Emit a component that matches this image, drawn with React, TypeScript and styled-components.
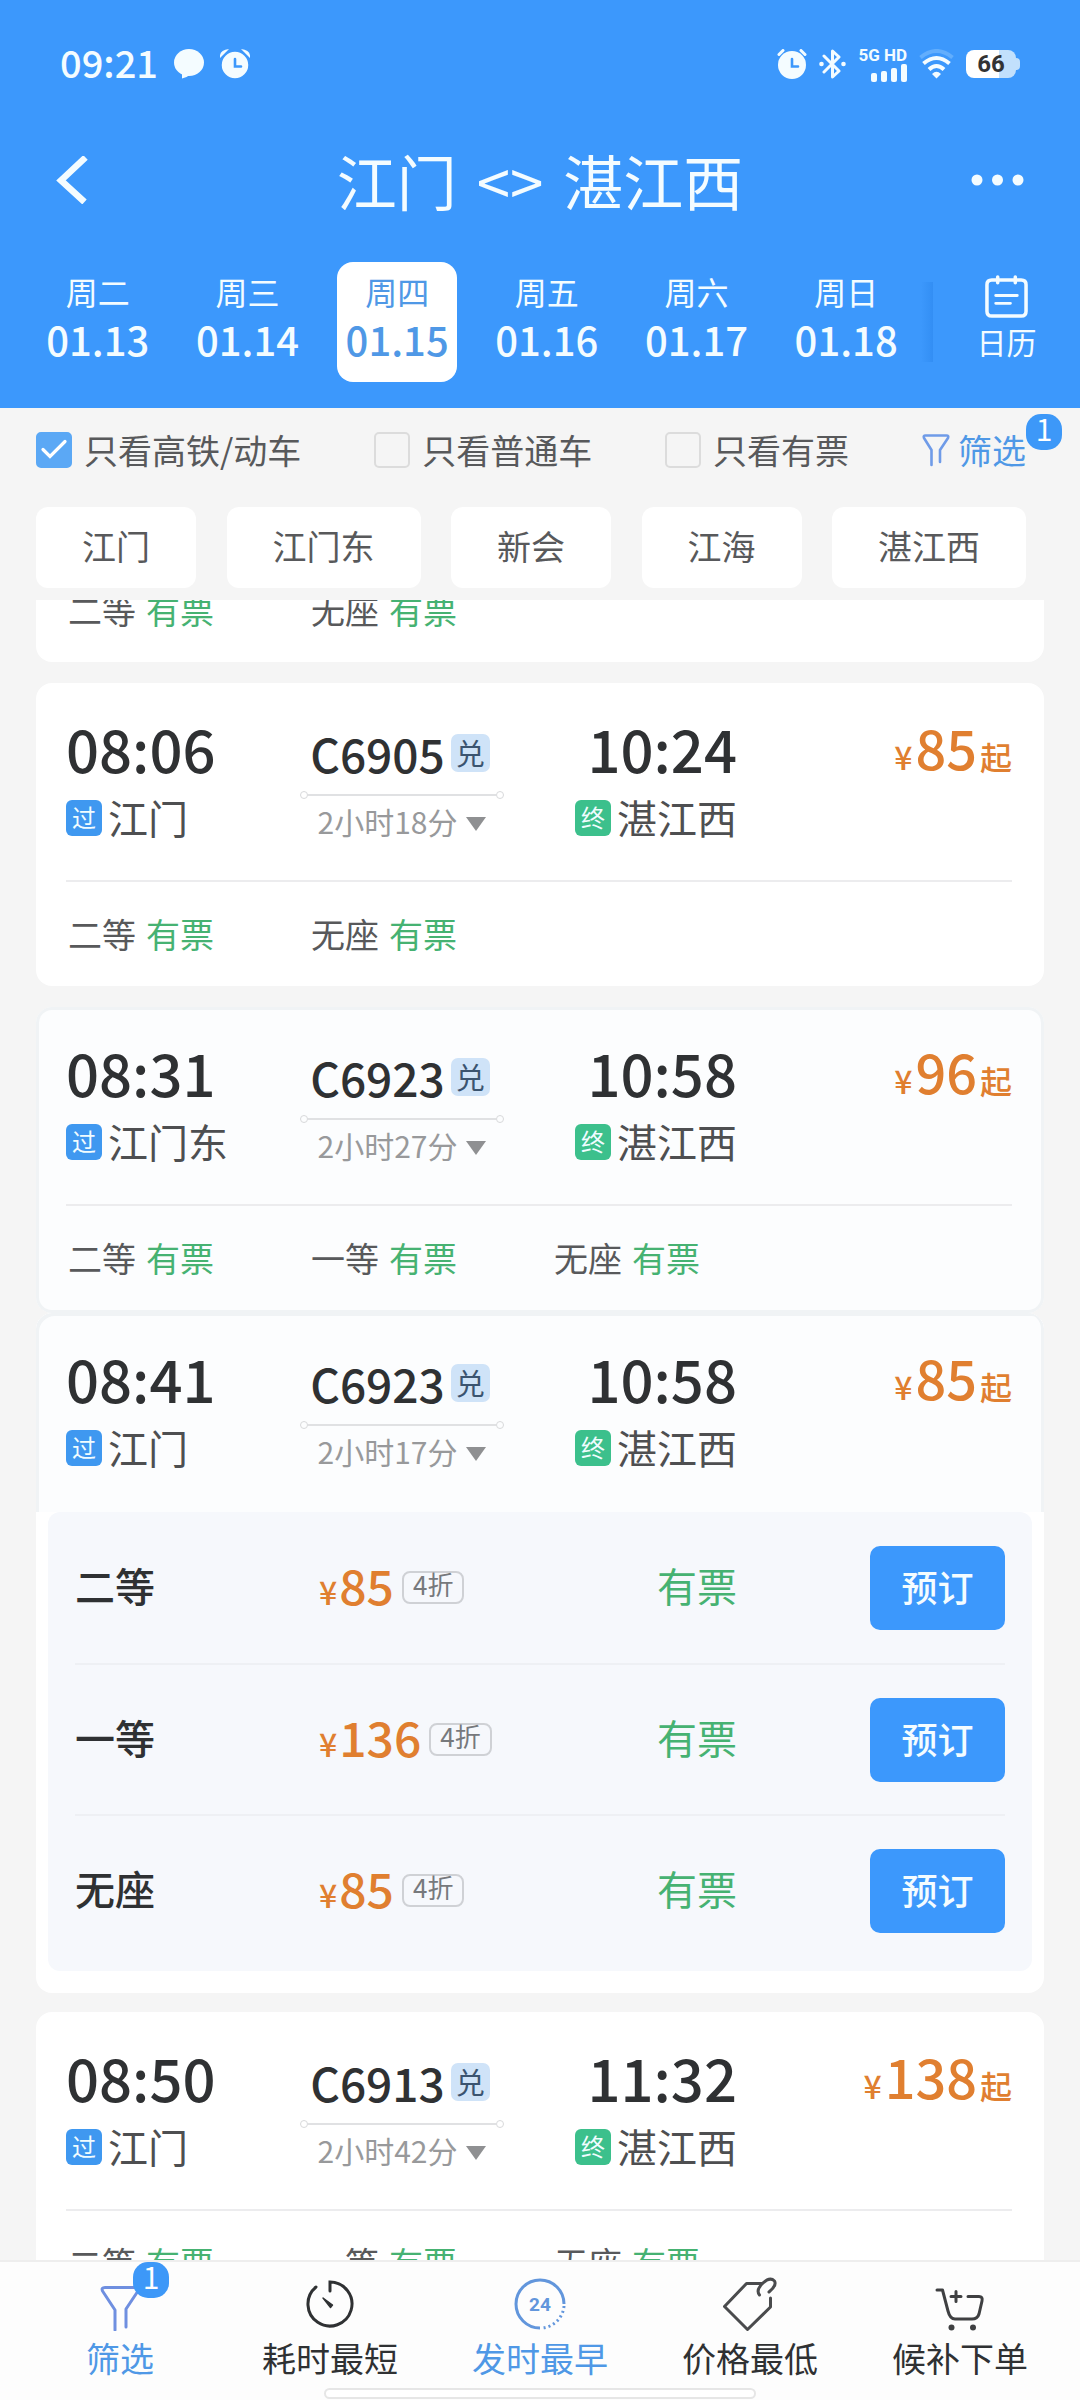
import React, { useState } from "react";
import styled, { createGlobalStyle, css } from "styled-components";

const color = {
  brand: "#3c98fc",
  link: "#4f98e6",
  page: "#f5f5f5",
  ink: "#2f3133",
  body: "#58595b",
  mute: "#98999b",
  line: "#ececee",
  ok: "#46b272",
  price: "#e07f30",
};

const GlobalStyle = createGlobalStyle`
  * { box-sizing: border-box; }
  body {
    margin: 0;
    background: ${color.page};
    font-family: "Noto Sans CJK SC", "Noto Sans", sans-serif;
    color: ${color.ink};
  }
  button {
    margin: 0;
    padding: 0;
    border: 0;
    background: none;
    color: inherit;
    font: inherit;
    cursor: pointer;
  }
  h1, p, ul { margin: 0; padding: 0; }
  ul { list-style: none; }
  svg { display: block; flex: none; }
`;

const Page = styled.div`
  display: flex;
  flex-direction: column;
  height: 100vh;
`;

/* ---------- header ---------- */

const Header = styled.header`
  flex: none;
  background: ${color.brand};
  color: #f4fcff;
`;

const StatusBar = styled.div`
  display: flex;
  align-items: center;
  justify-content: space-between;
  height: 128px;
  padding: 0 60px;
`;

const StatusGroup = styled.div<{ $gap: number }>`
  display: flex;
  align-items: center;
  gap: ${(p) => p.$gap}px;
`;

const Clock = styled.span`
  font-size: 38px;
  line-height: 40px;
  font-weight: 500;
  padding-bottom: 4px;
`;

const Signal = styled.div`
  display: flex;
  flex-direction: column;
  align-items: flex-end;
  gap: 1px;
  font: 700 17px/16px Roboto, sans-serif;
  white-space: nowrap;
`;

const Battery = styled.div`
  display: flex;
  align-items: center;
`;

const BatteryBody = styled.span`
  width: 50px;
  height: 28px;
  border-radius: 8px;
  background: linear-gradient(to right, #fff 66%, #c2e0fc 66%);
  color: #333;
  font: 700 24px/28px Roboto, sans-serif;
  text-align: center;
`;

const BatteryTip = styled.span`
  width: 4px;
  height: 12px;
  border-radius: 0 4px 4px 0;
  background: #c2e0fc;
`;

const TitleBar = styled.div`
  display: grid;
  grid-template-columns: 1fr auto 1fr;
  align-items: center;
  height: 102px;
  padding: 2px 56px 0;
`;

const IconButton = styled.button<{ $end?: boolean }>`
  justify-self: ${(p) => (p.$end ? "end" : "start")};
`;

const Route = styled.h1`
  display: flex;
  gap: 20px;
  font-size: 60px;
  line-height: 84px;
  font-weight: 400;
`;

const DateStrip = styled.nav`
  display: flex;
  padding: 32px 0 26px 23px;
`;

const Dates = styled.div`
  flex: 1;
  display: grid;
  grid-template-columns: repeat(6, 1fr);
  justify-items: center;
`;

const DateButton = styled.button<{ $active: boolean }>`
  width: 120px;
  height: 120px;
  padding: 8px 0;
  border-radius: 16px;
  display: flex;
  flex-direction: column;
  align-items: center;
  ${(p) =>
    p.$active &&
    css`
      background: #fff;
      color: ${color.link};
    `}
`;

const Weekday = styled.span`
  font-size: 32px;
  line-height: 42px;
`;

const Day = styled.span`
  font-size: 40px;
  line-height: 54px;
  font-weight: 500;
`;

const StripEdge = styled.span`
  width: 12px;
  margin: 20px 0;
  background: linear-gradient(to right, rgba(30, 120, 225, 0), rgba(30, 120, 225, 0.3));
`;

const CalendarButton = styled.button`
  width: 147px;
  display: flex;
  flex-direction: column;
  align-items: center;
  padding-top: 13px;
  gap: 2px;
  font-size: 30px;
  line-height: 42px;
`;

/* ---------- filters ---------- */

const Filters = styled.section`
  flex: none;
  display: flex;
  flex-direction: column;
  gap: 27px;
  padding: 12px 54px 12px 36px;
`;

const SpreadRow = styled.div`
  display: flex;
  align-items: center;
  justify-content: space-between;
`;

const CheckLabel = styled.label`
  display: flex;
  align-items: center;
  gap: 12px;
  font-size: 34px;
  line-height: 60px;
  color: ${color.body};
`;

const CheckBox = styled.span`
  display: grid;
  place-items: center;
  > * {
    grid-area: 1 / 1;
  }
`;

const CheckInput = styled.input`
  appearance: none;
  width: 36px;
  height: 36px;
  margin: 0;
  border: 2px solid #dcdcdc;
  border-radius: 5px;
  &:checked {
    border-color: #5ba8f5;
    background: #5ba8f5;
  }
`;

const FilterButton = styled.button`
  position: relative;
  display: flex;
  align-items: center;
  gap: 8px;
  font-size: 34px;
  line-height: 60px;
  color: ${color.link};
`;

const CountBadge = styled.span<{ $left: string; $top: number }>`
  position: absolute;
  left: ${(p) => p.$left};
  top: ${(p) => p.$top}px;
  width: 36px;
  height: 36px;
  border-radius: 15px;
  background: #3d98f8;
  color: #fff;
  font-size: 30px;
  line-height: 28px;
  text-align: center;
`;

const Chip = styled.button`
  padding: 0 46px 4px;
  border-radius: 12px;
  background: #fff;
  color: ${color.body};
  font-size: 34px;
  line-height: 77px;
`;

/* ---------- list ---------- */

const List = styled.main`
  flex: 1;
  min-height: 0;
  overflow-y: auto;
  scrollbar-width: none;
  padding: 0 36px;
`;

const Card = styled.article<{ $gap?: number; $tinted?: boolean }>`
  margin-bottom: ${(p) => p.$gap ?? 21}px;
  border-radius: 16px;
  background: #fff;
  overflow: hidden;
  ${(p) =>
    p.$tinted &&
    css`
      padding-bottom: 3px;
      background: #fcfdfe;
      box-shadow: inset 0 0 0 3px #f0f3f5;
    `}
`;

const ScrolledCard = styled(Card)`
  margin-top: -44px;
`;

const Info = styled.div<{ $open?: boolean }>`
  display: grid;
  grid-template-columns: 234fr 204fr 233fr 275fr;
  align-items: end;
  padding: 35px 32px 39px 30px;
  ${(p) =>
    p.$open &&
    css`
      padding-bottom: 41px;
      border-radius: 16px 16px 0 0;
      background: #fcfdfe;
      box-shadow: inset 3px 3px 0 #f0f3f5, inset -3px 0 0 #f0f3f5;
    `}
`;

const Stop = styled.div<{ $end?: boolean }>`
  display: flex;
  flex-direction: column;
  gap: 19px;
  align-items: ${(p) => (p.$end ? "flex-end" : "flex-start")};
`;

const Time = styled.span`
  font-size: 58px;
  line-height: 60px;
  font-weight: 500;
`;

const Station = styled.span`
  display: flex;
  align-items: flex-start;
  gap: 6px;
  height: 44px;
  font-size: 40px;
  line-height: 40px;
  color: #4e4f51;
`;

const StopTag = styled.span<{ $end?: boolean }>`
  width: 36px;
  height: 36px;
  margin-top: 3px;
  border-radius: 6px;
  background: ${(p) => (p.$end ? "#3cc08c" : "#3f98f0")};
  color: #f0fcff;
  font-size: 24px;
  line-height: 34px;
  text-align: center;
`;

const Trip = styled.div`
  display: flex;
  flex-direction: column;
  align-items: center;
`;

const TrainNo = styled.span`
  display: flex;
  align-items: center;
  gap: 6px;
  padding-right: 4px;
  font-size: 46px;
  line-height: 50px;
  font-weight: 500;
`;

const SwapTag = styled.span`
  width: 39px;
  height: 38px;
  border-radius: 7px;
  background: #cfe3f8;
  color: #3b5470;
  font-size: 29px;
  line-height: 36px;
  font-weight: 400;
  text-align: center;
`;

const Track = styled.span`
  display: flex;
  align-items: center;
  align-self: stretch;
  height: 6px;
  margin: 14px 0 3px;
  &::before,
  &::after {
    content: "";
    width: 6px;
    height: 6px;
    border: 1px solid #d8d9db;
    border-radius: 50%;
  }
`;

const TrackLine = styled.span`
  flex: 1;
  height: 2px;
  background: #e0e1e3;
`;

const Duration = styled.button`
  display: flex;
  align-items: center;
  gap: 9px;
  font-size: 30px;
  line-height: 40px;
  color: ${color.mute};
  white-space: nowrap;
`;

const Caret = styled.span`
  margin-top: 6px;
  border: 10px solid transparent;
  border-top: 14px solid #8f9092;
  border-bottom: 0;
`;

const Fare = styled.span`
  display: flex;
  align-items: baseline;
  gap: 3px;
  align-self: start;
  justify-self: end;
  font-size: 54px;
  line-height: 57px;
  font-weight: 500;
  color: ${color.price};
  white-space: nowrap;
`;

const FareUnit = styled.small`
  font-size: 32px;
`;

const SeatSummary = styled.ul`
  display: grid;
  grid-template-columns: 243fr 243fr 460fr;
  margin: 0 32px 0 30px;
  border-top: 2px solid ${color.line};
`;

const SeatItem = styled.li`
  display: flex;
  gap: 10px;
  padding-left: 2px;
  font-size: 34px;
  line-height: 104px;
  color: ${color.body};
`;

const Available = styled.span`
  color: ${color.ok};
`;

const SeatPanel = styled.ul`
  margin: 0 12px 22px;
  padding: 0 27px 6px;
  border-radius: 12px;
  background: #f6f8fc;
`;

const SeatRow = styled.li`
  display: grid;
  grid-template-columns: 244fr 338fr 213fr 135px;
  align-items: center;
  height: 151px;
  font-size: 40px;
  line-height: 56px;
  & + & {
    border-top: 2px solid #eef0f4;
  }
`;

const SeatName = styled.span`
  padding-bottom: 6px;
  font-weight: 500;
`;

const SeatStock = styled(Available)`
  padding-bottom: 6px;
`;

const SeatFare = styled.span`
  display: flex;
  align-items: center;
  gap: 8px;
`;

const SeatPrice = styled.span`
  display: flex;
  align-items: baseline;
  gap: 2px;
  font-size: 48px;
  font-weight: 500;
  color: ${color.price};
`;

const Discount = styled.span`
  height: 33px;
  padding: 0 9px;
  border: 2px solid #cfd1d5;
  border-radius: 8px;
  color: #77797c;
  font-size: 26px;
  line-height: 22px;
`;

const BookButton = styled.button`
  height: 84px;
  padding-bottom: 4px;
  border-radius: 10px;
  background: ${color.brand};
  color: #f4fcff;
  font-size: 36px;
  font-weight: 500;
`;

/* ---------- bottom bar ---------- */

const BottomBar = styled.footer`
  flex: none;
  display: flex;
  flex-direction: column;
  align-items: center;
  gap: 5px;
  padding-bottom: 1px;
  border-top: 2px solid #eeeeee;
  background: #fdfdfd;
`;

const Tabs = styled.nav`
  align-self: stretch;
  display: grid;
  grid-template-columns: repeat(5, 1fr);
  padding: 15px 15px 0;
`;

const Tab = styled.button<{ $active: boolean }>`
  display: flex;
  flex-direction: column;
  align-items: center;
  gap: 2px;
  font-size: 34px;
  line-height: 50px;
  color: ${(p) => (p.$active ? color.link : color.ink)};
`;

const TabIcon = styled.span`
  position: relative;
`;

const HomeBar = styled.span`
  width: 40%;
  height: 11px;
  border: 2px solid #e6e6e6;
  border-radius: 6px;
  background: #fff;
`;

/* ---------- icons ---------- */

const ChatIcon = () => (
  <svg width="30" height="30" viewBox="0 0 30 30" fill="#f4fcff">
    <ellipse cx="15" cy="13.5" rx="15" ry="13.5" />
    <path d="M8 22 V29.5 Q13 28.5 17 25 Z" />
  </svg>
);

const AlarmIcon = ({ slim }: { slim?: boolean }) => (
  <svg width="30" height="30" viewBox="0 0 30 30">
    {slim ? (
      <path d="M2 5.5 L6 1.5 M28 5.5 L24 1.5" stroke="#f4fcff" strokeWidth="3" strokeLinecap="round" />
    ) : (
      <path d="M0 9 Q-1 1 9 0 Z M30 9 Q31 1 21 0 Z" fill="#f4fcff" />
    )}
    <circle cx="15" cy="16" r="14" fill="#f4fcff" stroke={color.brand} strokeWidth={slim ? 0 : 1.5} />
    <path d="M15 10 V17.5 H21" fill="none" stroke={color.brand} strokeWidth="2.6" strokeLinecap="round" />
  </svg>
);

const BluetoothIcon = () => (
  <svg width="27" height="30" viewBox="0 0 27 30" fill="none" stroke="#f4fcff" strokeWidth="3" strokeLinejoin="round" strokeLinecap="round">
    <path d="M5 7 L20 22 L13.5 28 V2 L20 8 L5 23" />
    <circle cx="2.5" cy="15" r="2.3" fill="#f4fcff" stroke="none" />
    <circle cx="24.5" cy="15" r="2.3" fill="#f4fcff" stroke="none" />
  </svg>
);

const BarsIcon = () => (
  <svg width="36" height="18" viewBox="0 0 36 18" fill="#f4fcff">
    <rect x="0" y="9" width="6" height="9" rx="2" />
    <rect x="10" y="7" width="6" height="11" rx="2" />
    <rect x="20" y="4" width="6" height="14" rx="2" />
    <rect x="30" y="0" width="6" height="18" rx="2" />
  </svg>
);

const WifiIcon = () => (
  <svg width="35" height="30" viewBox="0 0 35 30" fill="none" stroke="#f4fcff" strokeWidth="4">
    <path d="M1.5 8.5 Q17.5 -4.5 33.5 8.5" stroke="#62aefd" />
    <path d="M4.5 14.5 Q17.5 3.5 30.5 14.5" />
    <path d="M10 20.5 Q17.5 13.5 25 20.5" />
    <path d="M13 25 Q17.5 20.5 22 25 L17.5 29.5 Z" fill="#f4fcff" stroke="none" />
  </svg>
);

const BackIcon = () => (
  <svg width="32" height="48" viewBox="0 0 32 48" fill="none" stroke="#f4fcff" strokeWidth="6.5">
    <path d="M29.5 1.5 L5 24.5 L28.5 46" />
  </svg>
);

const MoreIcon = () => (
  <svg width="53" height="12" viewBox="0 0 53 12" fill="#f4fcff">
    <circle cx="6" cy="6" r="5.5" />
    <circle cx="26.5" cy="6" r="5.5" />
    <circle cx="47" cy="6" r="5.5" />
  </svg>
);

const CalendarIcon = () => (
  <svg width="43" height="43" viewBox="0 0 44 44" fill="none" stroke="#f4fcff" strokeWidth="3.6" strokeLinecap="round">
    <path d="M9 5 H7 Q2 5 2 10 V37 Q2 42 7 42 H37 Q42 42 42 37 V10 Q42 5 37 5 Z" />
    <path d="M13 2 V8 M31 2 V8" />
    <path d="M11 21 H33 M11 29 H26" strokeWidth="3" />
  </svg>
);

const FunnelIcon = () => (
  <svg width="28" height="34" viewBox="0 0 28 34" fill="none" stroke="#6f9be8" strokeWidth="2.6" strokeLinecap="round" strokeLinejoin="round">
    <path d="M9.5 32 V17 L2 5 Q1 2.500 3.5 2.500 H24.5 Q27 2.500 26 5 L18 17 V29" />
  </svg>
);

const CheckMark = () => (
  <svg width="36" height="36" viewBox="0 0 36 36" fill="none" stroke="#fff" strokeWidth="3.2" pointerEvents="none">
    <path d="M7 17.5 L14 24.500 L29 9.5" strokeLinecap="round" />
  </svg>
);

const tabSvg = { width: 54, height: 54, viewBox: "0 0 54 54", fill: "none", strokeWidth: 3 } as const;

const TabFunnel = () => (
  <svg {...tabSvg} stroke="#6f8fe0" strokeLinecap="round" strokeLinejoin="round">
    <path d="M22 53 V33 L9.5 14 Q8 10.500 12 10.500 H43 Q47 10.500 45 14 L33 32 V50" />
  </svg>
);

const TabTimer = () => (
  <svg {...tabSvg} stroke={color.ink} strokeLinecap="round">
    <path d="M27 14 V5 A22 22 0 1 1 13 10" />
    <path d="M20 21 L29.5 28 L27.5 30.500 Z" fill={color.ink} strokeWidth="1.4" strokeLinejoin="round" />
  </svg>
);

const TabDay = () => (
  <svg {...tabSvg} stroke="#6296dc">
    <path d="M27 51 A24 24 0 1 1 51 27" />
    <path d="M51 29 A24 24 0 0 1 29 51" strokeDasharray="2 3" />
    <text x="27" y="34" textAnchor="middle" fontFamily="Roboto, sans-serif" fontSize="19" fontWeight="700" fill="#6296dc" stroke="none">
      24
    </text>
  </svg>
);

const TabTag = () => (
  <svg {...tabSvg} stroke="#4a4b4d" strokeLinecap="round" strokeLinejoin="round">
    <path d="M39 6.5 H23.5 L1.5 29.5 L24.5 52.5 L47.5 30 V21" />
    <path d="M36.5 18 Q32.5 13 40 6 Q47 -0.5 51.5 4 Q54 8.5 46 15" />
  </svg>
);

const TabCart = () => (
  <svg {...tabSvg} stroke="#3f4042" strokeLinecap="round" strokeLinejoin="round">
    <path d="M4 13 H9.5 L15 34 Q17 42 22 42 H39 Q44.5 42 46 37 L49 24 Q50 19.5 46 19.5 H35" />
    <path d="M23 14.5 V24.5 M18 19.5 H28" />
    <circle cx="18.5" cy="50.5" r="3" fill="#3f4042" stroke="none" />
    <circle cx="40" cy="50.5" r="3" fill="#3f4042" stroke="none" />
  </svg>
);

/* ---------- data ---------- */

const dates = [
  ["周二", "01.13"],
  ["周三", "01.14"],
  ["周四", "01.15"],
  ["周五", "01.16"],
  ["周六", "01.17"],
  ["周日", "01.18"],
];

const toggles = ["只看高铁/动车", "只看普通车", "只看有票"];
const stations = ["江门", "江门东", "新会", "江海", "湛江西"];

interface Train {
  depart: string;
  from: string;
  no: string;
  duration: string;
  arrive: string;
  to: string;
  fare: string;
}

const tabs = [
  { label: "筛选", icon: <TabFunnel />, active: true, count: 1 },
  { label: "耗时最短", icon: <TabTimer />, active: false },
  { label: "发时最早", icon: <TabDay />, active: true },
  { label: "价格最低", icon: <TabTag />, active: false },
  { label: "候补下单", icon: <TabCart />, active: false },
];

const offers = [
  ["二等", "85"],
  ["一等", "136"],
  ["无座", "85"],
];

/* ---------- parts ---------- */

const TrainInfo = ({ train, open }: { train: Train; open?: boolean }) => (
  <Info $open={open}>
    <Stop>
      <Time>{train.depart}</Time>
      <Station>
        <StopTag>过</StopTag>
        {train.from}
      </Station>
    </Stop>
    <Trip>
      <TrainNo>
        {train.no}
        <SwapTag>兑</SwapTag>
      </TrainNo>
      <Track>
        <TrackLine />
      </Track>
      <Duration type="button">
        {train.duration}
        <Caret />
      </Duration>
    </Trip>
    <Stop $end>
      <Time>{train.arrive}</Time>
      <Station>
        <StopTag $end>终</StopTag>
        {train.to}
      </Station>
    </Stop>
    <Fare>
      <FareUnit>¥</FareUnit>
      {train.fare}
      <FareUnit>起</FareUnit>
    </Fare>
  </Info>
);

const Seats = ({ names }: { names: string[] }) => (
  <SeatSummary>
    {names.map((name) => (
      <SeatItem key={name}>
        {name}
        <Available>有票</Available>
      </SeatItem>
    ))}
  </SeatSummary>
);

export default function App() {
  const [day, setDay] = useState(2);
  const [checked, setChecked] = useState([true, false, false]);

  return (
    <Page>
      <GlobalStyle />
      <Header>
        <StatusBar>
          <StatusGroup $gap={16}>
            <Clock>09:21</Clock>
            <ChatIcon />
            <AlarmIcon />
          </StatusGroup>
          <StatusGroup $gap={12}>
            <AlarmIcon slim />
            <BluetoothIcon />
            <Signal>
              5G HD
              <BarsIcon />
            </Signal>
            <WifiIcon />
            <Battery>
              <BatteryBody>66</BatteryBody>
              <BatteryTip />
            </Battery>
          </StatusGroup>
        </StatusBar>
        <TitleBar>
          <IconButton type="button" aria-label="返回">
            <BackIcon />
          </IconButton>
          <Route>
            <span>江门</span>
            <span>&lt;&gt;</span>
            <span>湛江西</span>
          </Route>
          <IconButton $end type="button" aria-label="更多">
            <MoreIcon />
          </IconButton>
        </TitleBar>
        <DateStrip>
          <Dates>
            {dates.map(([week, date], i) => (
              <DateButton key={date} type="button" $active={i === day} onClick={() => setDay(i)}>
                <Weekday>{week}</Weekday>
                <Day>{date}</Day>
              </DateButton>
            ))}
          </Dates>
          <StripEdge />
          <CalendarButton type="button">
            <CalendarIcon />
            日历
          </CalendarButton>
        </DateStrip>
      </Header>

      <Filters>
        <SpreadRow>
          {toggles.map((label, i) => (
            <CheckLabel key={label}>
              <CheckBox>
                <CheckInput
                  type="checkbox"
                  checked={checked[i]}
                  onChange={() => setChecked(checked.map((v, k) => (k === i ? !v : v)))}
                />
                {checked[i] && <CheckMark />}
              </CheckBox>
              {label}
            </CheckLabel>
          ))}
          <FilterButton type="button">
            <FunnelIcon />
            筛选
            <CountBadge $left="100%" $top={-6}>
              1
            </CountBadge>
          </FilterButton>
        </SpreadRow>
        <SpreadRow>
          {stations.map((s) => (
            <Chip key={s} type="button">
              {s}
            </Chip>
          ))}
        </SpreadRow>
      </Filters>

      <List>
        <ScrolledCard>
          <Seats names={["二等", "无座"]} />
        </ScrolledCard>
        <Card>
          <TrainInfo
            train={{ depart: "08:06", from: "江门", no: "C6905", duration: "2小时18分", arrive: "10:24", to: "湛江西", fare: "85" }}
          />
          <Seats names={["二等", "无座"]} />
        </Card>
        <Card $tinted $gap={0}>
          <TrainInfo
            train={{ depart: "08:31", from: "江门东", no: "C6923", duration: "2小时27分", arrive: "10:58", to: "湛江西", fare: "96" }}
          />
          <Seats names={["二等", "一等", "无座"]} />
        </Card>
        <Card $gap={19}>
          <TrainInfo
            open
            train={{ depart: "08:41", from: "江门", no: "C6923", duration: "2小时17分", arrive: "10:58", to: "湛江西", fare: "85" }}
          />
          <SeatPanel>
            {offers.map(([name, price]) => (
              <SeatRow key={name}>
                <SeatName>{name}</SeatName>
                <SeatFare>
                  <SeatPrice>
                    <FareUnit>¥</FareUnit>
                    {price}
                  </SeatPrice>
                  <Discount>4折</Discount>
                </SeatFare>
                <SeatStock>有票</SeatStock>
                <BookButton type="button">预订</BookButton>
              </SeatRow>
            ))}
          </SeatPanel>
        </Card>
        <Card>
          <TrainInfo
            train={{ depart: "08:50", from: "江门", no: "C6913", duration: "2小时42分", arrive: "11:32", to: "湛江西", fare: "138" }}
          />
          <Seats names={["二等", "一等", "无座"]} />
        </Card>
      </List>

      <BottomBar>
        <Tabs>
          {tabs.map((t) => (
            <Tab key={t.label} type="button" $active={t.active}>
              <TabIcon>
                {t.icon}
                {t.count && (
                  <CountBadge $left="40px" $top={-15}>
                    {t.count}
                  </CountBadge>
                )}
              </TabIcon>
              {t.label}
            </Tab>
          ))}
        </Tabs>
        <HomeBar />
      </BottomBar>
    </Page>
  );
}
